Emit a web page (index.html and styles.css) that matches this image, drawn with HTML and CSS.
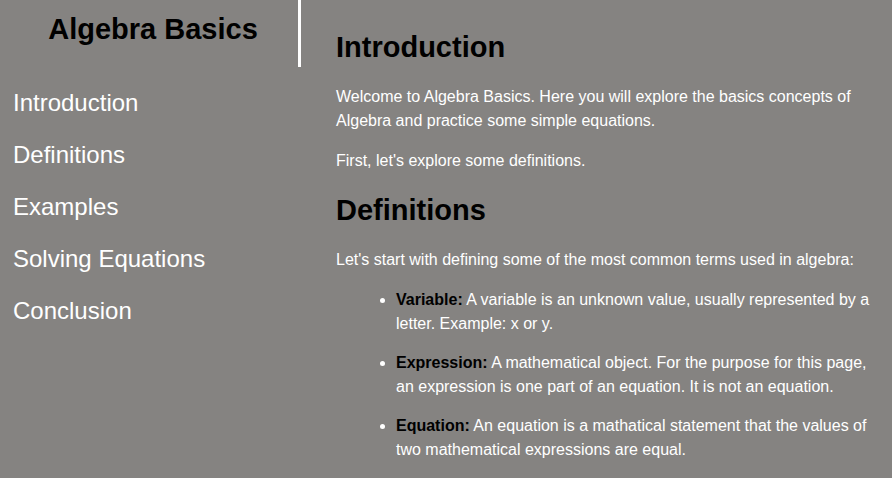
FILE: index.html
```html
<!DOCTYPE html>
<html lang="en">
<head>
<meta charset="utf-8">
<title>Algebra Basics</title>
<link rel="stylesheet" href="styles.css">
</head>
<body>
<nav class="navbar">
  <header class="navbar-title">Algebra Basics</header>
  <ul class="nav-list">
    <li><a class="nav-link" href="#introduction">Introduction</a></li>
    <li><a class="nav-link" href="#definitions">Definitions</a></li>
    <li><a class="nav-link" href="#examples">Examples</a></li>
    <li><a class="nav-link" href="#solving">Solving Equations</a></li>
    <li><a class="nav-link" href="#conclusion">Conclusion</a></li>
  </ul>
</nav>
<main class="content">
  <section class="section" id="introduction">
    <h2 class="heading">Introduction</h2>
    <p>Welcome to Algebra Basics. Here you will explore the basics concepts of Algebra and practice some simple equations.</p>
    <p>First, let's explore some definitions.</p>
  </section>
  <section class="section" id="definitions">
    <h2 class="heading">Definitions</h2>
    <p>Let's start with defining some of the most common terms used in algebra:</p>
    <ul class="terms">
      <li><strong>Variable:</strong> A variable is an unknown value, usually represented by a letter. Example: x or y.</li>
      <li><strong>Expression:</strong> A mathematical object. For the purpose for this page, an expression is one part of an equation. It is not an equation.</li>
      <li><strong>Equation:</strong> An equation is a mathatical statement that the values of two mathematical expressions are equal.</li>
    </ul>
  </section>
</main>
</body>
</html>
```
FILE: styles.css
```css
* {
  box-sizing: border-box;
}

body {
  display: grid;
  grid-template-columns: 301px minmax(0, 1fr);
  margin: 0;
  background: #858381;
  color: #fff;
  font-family: "Liberation Sans", Arial, sans-serif;
  font-size: 16px;
  line-height: 24px;
}

.navbar-title {
  height: 67px;
  padding: 12px 0 0 8px;
  border-right: 3px solid #fff;
  color: #000;
  font-size: 29px;
  font-weight: bold;
  line-height: 34px;
  text-align: center;
}

.nav-list {
  margin: 0;
  padding: 10px 13px;
  list-style: none;
}

.nav-link {
  display: block;
  padding: 8px 0;
  color: #fff;
  font-size: 24px;
  line-height: 36px;
  text-decoration: none;
}

.content {
  padding: 26px 16px 0 35px;
}

.heading {
  margin: 0 0 16px;
  color: #000;
  font-size: 29px;
  line-height: 43px;
}

p {
  margin: 0 0 16px;
}

.section {
  margin-bottom: 16px;
}

.terms {
  margin: 0;
  padding-left: 60px;
}

.terms li {
  margin-bottom: 15px;
}

.terms strong {
  color: #000;
}
```
